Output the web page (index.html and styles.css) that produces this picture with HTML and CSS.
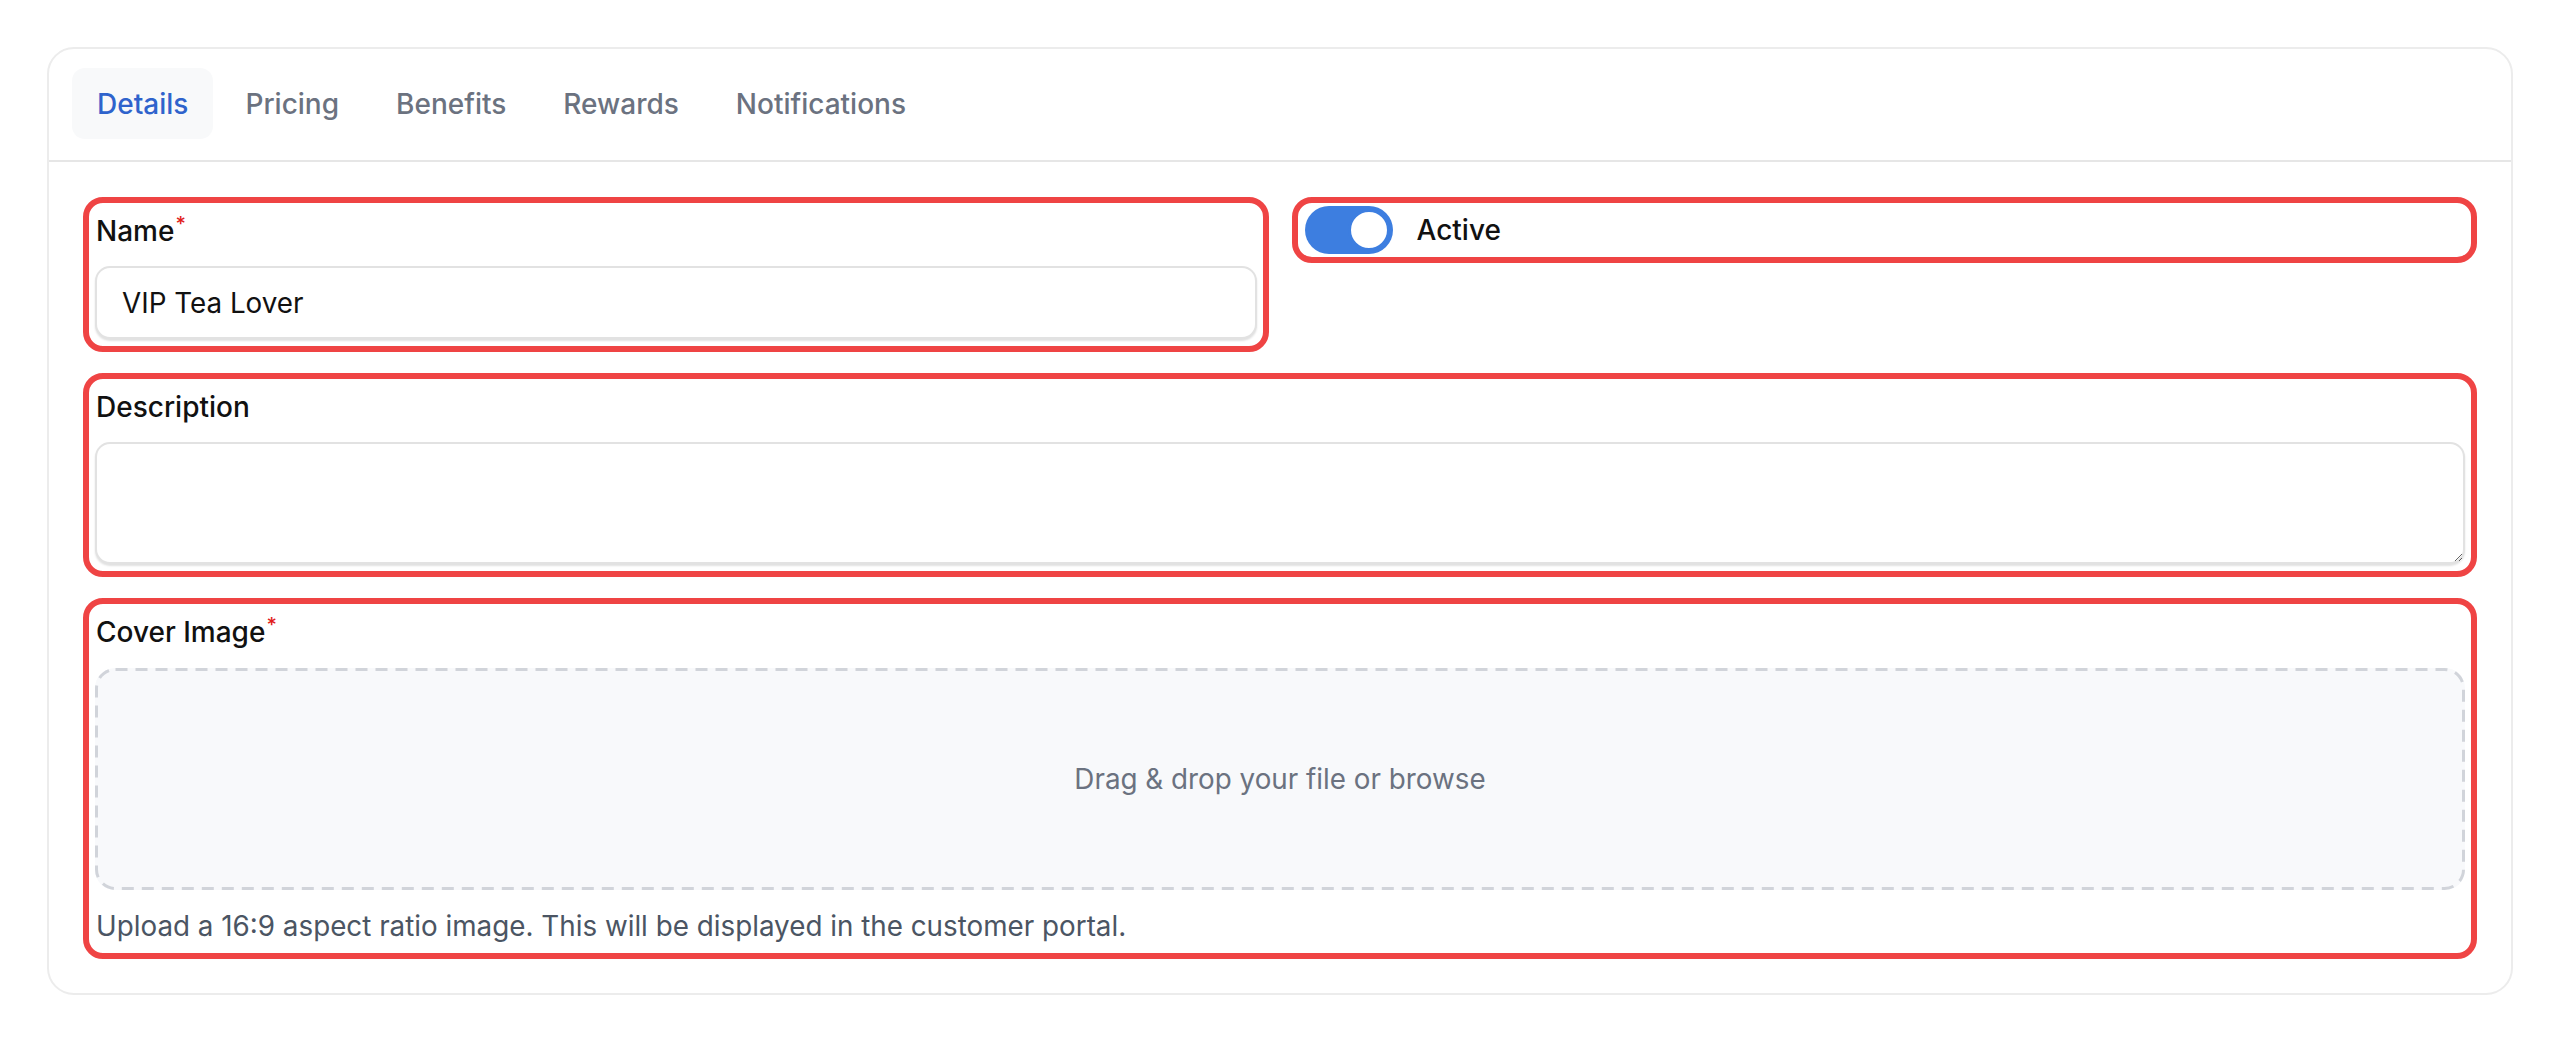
FILE: index.html
```html
<!DOCTYPE html>
<html lang="en">
<head>
<meta charset="utf-8">
<title>Membership details</title>
<link rel="stylesheet" href="styles.css">
</head>
<body>
<div class="card">
  <nav class="tabs">
    <div class="tab active">Details</div>
    <div class="tab">Pricing</div>
    <div class="tab">Benefits</div>
    <div class="tab">Rewards</div>
    <div class="tab">Notifications</div>
  </nav>
  <div class="form">
    <div class="row">
      <div class="field">
        <label class="label">Name<span class="req">*</span></label>
        <input class="input" type="text" value="VIP Tea Lover">
      </div>
      <div class="field field-toggle">
        <span class="switch"><span class="knob"></span></span>
        <span class="switch-label">Active</span>
      </div>
    </div>
    <div class="field">
      <label class="label">Description</label>
      <textarea class="textarea"></textarea>
    </div>
    <div class="field">
      <label class="label">Cover Image<span class="req">*</span></label>
      <div class="dropzone">
        <svg class="dz-border" aria-hidden="true"><rect class="dz-rect" x="1.5" y="1.5" rx="19" ry="19"></rect></svg>
        <span class="dz-text">Drag &amp; drop your file or browse</span>
      </div>
      <p class="help">Upload a 16:9 aspect ratio image. This will be displayed in the customer portal.</p>
    </div>
  </div>
</div>
</body>
</html>
```

FILE: styles.css
```css
* { box-sizing: border-box; }

html, body {
  margin: 0;
  background: #ffffff;
}

body {
  padding: 47px;
  font-family: Inter, "Noto Sans", "Liberation Sans", sans-serif;
  color: #111111;
}

.card {
  border: 2px solid #ececec;
  border-radius: 27px;
  background: #ffffff;
}

.tabs {
  display: flex;
  gap: 7px;
  padding: 19px 23px 21px;
  border-bottom: 2px solid #e6e6e6;
}

.tab {
  height: 71px;
  padding: 0 25px;
  display: flex;
  align-items: center;
  font-size: 28px;
  font-weight: 500;
  color: #6b7280;
  border-radius: 13px;
}

.tab.active {
  background: #f8f9fa;
  color: #2f63cc;
}

.form {
  padding: 35px 34px 34px;
  display: flex;
  flex-direction: column;
  gap: 21px;
}

.row {
  display: grid;
  grid-template-columns: 1fr 1fr;
  gap: 23px;
  align-items: start;
}

.field {
  border: 6px solid #ef4444;
  border-radius: 20px;
  padding: 8px 6px 7px;
  display: flex;
  flex-direction: column;
}

.label {
  font-size: 28px;
  line-height: 40px;
  font-weight: 500;
  color: #111111;
  margin-bottom: 15px;
  padding-left: 1px;
}

.req {
  color: #e11d1d;
  font-size: 20px;
  vertical-align: 10px;
  line-height: 0;
  margin-left: 1px;
}

.input {
  height: 73px;
  width: 100%;
  padding: 0 25px;
  border: 2px solid #e2e2e2;
  border-radius: 15px;
  box-shadow: 0 2px 2px rgba(0, 0, 0, 0.12);
  font-family: inherit;
  font-size: 27.8px;
  color: #111111;
  background: #ffffff;
  outline: none;
}

.textarea {
  height: 122px;
  width: 100%;
  padding: 14px 25px;
  border: 2px solid #e2e2e2;
  border-radius: 15px;
  box-shadow: 0 2px 2px rgba(0, 0, 0, 0.12);
  font-family: inherit;
  font-size: 28px;
  background: #ffffff;
  outline: none;
  display: block;
}

.field-toggle {
  flex-direction: row;
  align-items: center;
  gap: 24px;
  padding: 3px 7px;
}

.switch {
  width: 88px;
  height: 48px;
  border-radius: 24px;
  background: #3d7ee0;
  display: flex;
  align-items: center;
  justify-content: flex-end;
  padding: 0 3px;
}

.knob {
  width: 42px;
  height: 42px;
  border-radius: 50%;
  background: #ffffff;
  border: 3px solid #3d7ee0;
}

.switch-label {
  font-size: 28px;
  font-weight: 500;
  color: #111111;
}

.dropzone {
  position: relative;
  margin-top: 1px;
  height: 222px;
  border-radius: 20px;
  background: #f8f9fb;
  display: flex;
  align-items: center;
  justify-content: center;
}

.dz-border {
  position: absolute;
  inset: 0;
  width: 100%;
  height: 100%;
  overflow: visible;
}

.dz-rect {
  width: calc(100% - 3px);
  height: calc(100% - 3px);
  fill: none;
  stroke: #d1d4da;
  stroke-width: 3;
  stroke-dasharray: 12 8;
}

.dz-text {
  position: relative;
  font-size: 27.8px;
  color: #6b7280;
}

.help {
  margin: 16px 0 0;
  font-size: 27.8px;
  line-height: 40px;
  color: #4b5563;
  padding-left: 1px;
}
```
